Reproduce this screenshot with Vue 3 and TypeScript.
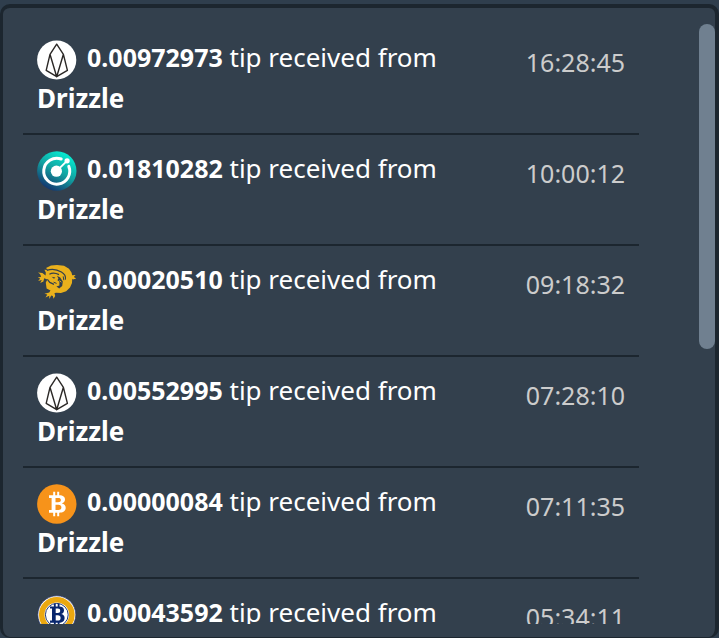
<script setup lang="ts">
import { computed, ref } from 'vue'

type Coin = 'eos' | 'kmd' | 'bsv' | 'btc' | 'btg'

interface Tip {
  coin: Coin
  amount: string
  sender: string
  time: string
}

const tips = ref<Tip[]>([
  { coin: 'eos', amount: '0.00972973', sender: 'Drizzle', time: '16:28:45' },
  { coin: 'kmd', amount: '0.01810282', sender: 'Drizzle', time: '10:00:12' },
  { coin: 'bsv', amount: '0.00020510', sender: 'Drizzle', time: '09:18:32' },
  { coin: 'eos', amount: '0.00552995', sender: 'Drizzle', time: '07:28:10' },
  { coin: 'btc', amount: '0.00000084', sender: 'Drizzle', time: '07:11:35' },
  { coin: 'btg', amount: '0.00043592', sender: 'Drizzle', time: '05:34:11' },
])

const visibleShare = ref(0.542)
const thumbHeight = computed(() => `${visibleShare.value * 100}%`)
</script>

<template>
  <main class="panel">
    <ul class="list">
      <li v-for="tip in tips" :key="tip.time" class="row">
        <p class="message">
          <svg class="coin" viewBox="0 0 40 40" aria-hidden="true">
            <g v-if="tip.coin === 'eos'">
              <circle cx="19.7" cy="20" r="19.6" fill="#fff" />
              <path
                d="M19.7 4.2 13 14.3 9.2 30.3 19.7 36.7 30.4 30.3 26.4 14.3ZM13 14.3 19.7 36.7 26.4 14.3"
                fill="none" stroke="#2b2826" stroke-width="1.4" stroke-linejoin="round"
              />
              <path d="M18.3 34.2h2.8l-1.4 3Z" fill="#2b2826" />
            </g>
            <g v-else-if="tip.coin === 'kmd'">
              <defs>
                <linearGradient id="kmd-fill" x1="0.75" y1="0.05" x2="0.25" y2="0.95">
                  <stop offset="0" stop-color="#06ecd2" />
                  <stop offset="0.5" stop-color="#12a0a0" />
                  <stop offset="1" stop-color="#14356f" />
                </linearGradient>
              </defs>
              <circle cx="19.8" cy="20" r="19.7" fill="url(#kmd-fill)" />
              <path
                d="M24.2 8A13 13 0 1 0 31.8 15.4"
                fill="none" stroke="#fff" stroke-width="3" stroke-linecap="round"
              />
              <path d="M19.6 20 30 9.8" stroke="#fff" stroke-width="1.8" />
              <circle cx="19.4" cy="20.2" r="5.6" fill="#fff" />
              <circle cx="30.1" cy="9.8" r="2.6" fill="#fff" />
            </g>
            <g v-else-if="tip.coin === 'bsv'">
              <path
                d="M9 6 14 3.6 20 3 27 3.8 32 6.8 34.5 10.5 35.2 13.2 38.6 13 36.8 15 39.2 16.4 36 17.4 35.2 16.8 35 21 33 25.6 29.2 29.2 24 31 19.5 30.8 17.5 31 18.2 34 16.5 36.8 15.8 34 14.2 33.4 12.4 37 12.2 33.8 8.5 35.5 10.3 32.6 7.4 31.8 12.2 30.6 13.5 28.5 9.6 26.5 9.2 23.8 8.8 20.5 10.4 17.6 7.2 16.2 6.4 19.4 3.2 21 4.8 18 1.2 19 3.2 16.6 0.8 15.6 4.2 14.8 3 12 1 10.6 5.4 11 8.6 13.6 8.8 10.6 7.4 7.8 11 8Z"
                fill="#eab11c"
              />
              <path
                d="M9.8 8.4C14 6.8 20 7.4 24.4 10 27.8 12 29 14.6 28.4 17.6M12.4 12.2C15 10.6 19 11 22 12.6M10.4 17.4 12.8 20.4 17 22.4"
                fill="none" stroke="#33404d" stroke-width="1.2"
              />
              <path
                d="M14.6 14.8 18.4 15.6 17 16.8ZM20 13.8 23.2 15.4 25.8 19.6 25.2 24 22.2 26.6 19.4 24.4 22.4 23.4 22.4 19.4 20.4 18.2 21.4 16.6Z"
                fill="#33404d"
              />
              <path d="M26.2 14.4 26.8 18.2M16.6 20.2 19.6 21.4" stroke="#33404d" stroke-width="1" />
              <path d="M22.4 18.6 24.4 20.2" stroke="#eab11c" stroke-width="0.9" />
            </g>
            <g v-else-if="tip.coin === 'btc'">
              <circle cx="19.8" cy="20" r="19.7" fill="#f7931a" />
              <path
                d="M12 11.3H22.3C26.2 11.3 28 13 28 15.5 28 17.5 26.8 18.8 24.8 19.4 27.3 19.9 28.7 21.5 28.7 23.8 28.7 27 26.3 28.7 22.3 28.7H12V26H14.6V14H12ZM18.5 14V18.3H21C22.9 18.3 23.9 17.6 23.9 16.1 23.9 14.6 22.9 14 21 14ZM18.5 20.8V26H21.3C23.4 26 24.4 25.1 24.4 23.4 24.4 21.6 23.4 20.8 21.3 20.8Z"
                fill="#fff" fill-rule="evenodd"
              />
              <path d="M17.2 7.8V12M21.2 7.8V12M17.2 28V32.2M21.2 28V32.2" stroke="#fff" stroke-width="2" />
            </g>
            <g v-else>
              <circle cx="19.8" cy="19.8" r="19" fill="#fff" stroke="#29366d" stroke-width="0.7" />
              <circle cx="19.8" cy="19.8" r="15.1" fill="none" stroke="#eba810" stroke-width="5.6" />
              <circle cx="19.8" cy="19.8" r="11.4" fill="#fff" stroke="#08266d" stroke-width="0.9" />
              <path
                d="M13 11.4H22C25.6 11.4 27 12.8 27 15.2 27 17.2 26 18.5 24.2 19 26.5 19.6 27.6 21 27.6 23 27.6 26.2 25.4 27.8 21.8 27.8H13V25.6H15V13.6H13ZM18.7 13.6V18H20.8C22.4 18 23.2 17.3 23.2 15.8 23.2 14.3 22.4 13.6 20.8 13.6ZM18.7 20.2V25.6H20.8C22.7 25.6 23.6 24.7 23.6 22.9 23.6 21.1 22.7 20.2 20.8 20.2Z"
                fill="#08266d" fill-rule="evenodd"
              />
              <path d="M17.8 8.4V12M21.6 8.4V12M17.8 27V31M21.6 27V31" stroke="#08266d" stroke-width="1.8" />
            </g>
          </svg>
          <strong class="amount">{{ tip.amount }}</strong> tip received from <strong>{{ tip.sender }}</strong>
        </p>
        <time class="time">{{ tip.time }}</time>
      </li>
    </ul>
    <div class="track">
      <div class="thumb" :style="{ height: thumbHeight }"></div>
    </div>
  </main>
</template>

<style>
body {
  margin: 0;
  background: #2f3e4d;
  overflow: hidden;
}

#app {
  display: flex;
  height: 100vh;
  padding-top: 4px;
  box-sizing: border-box;
}
</style>

<style scoped>
.panel {
  flex: 1;
  display: flex;
  justify-content: space-between;
  min-width: 0;
  box-sizing: border-box;
  padding: 16px 0 13px 20px;
  border: solid #1c262f;
  border-width: 4px 4px 1px 3px;
  border-radius: 10px;
  background: #33404d;
  color: #fff;
  font-family: "Noto Sans", "Open Sans", sans-serif;
  font-size: 26px;
  line-height: 41px;
}

.list {
  flex: 1;
  min-width: 0;
  margin: 0 60px 0 0;
  padding: 0;
  list-style: none;
  overflow: hidden;
}

.row {
  display: grid;
  grid-template-columns: 3fr 1fr;
  padding: 13px 14px 14px;
  border-bottom: 2px solid #1c262f;
}

.message {
  margin: 0;
}

.coin {
  width: 40px;
  height: 40px;
  margin: -4px 10px -4px 0;
  vertical-align: middle;
}

.amount,
.time {
  font-size: 25px;
}

.time {
  height: 41px;
  padding-top: 5px;
  color: #ccc;
  text-align: right;
}

.track {
  width: 16px;
}

.thumb {
  border-radius: 8px;
  background: #708090;
}
</style>
